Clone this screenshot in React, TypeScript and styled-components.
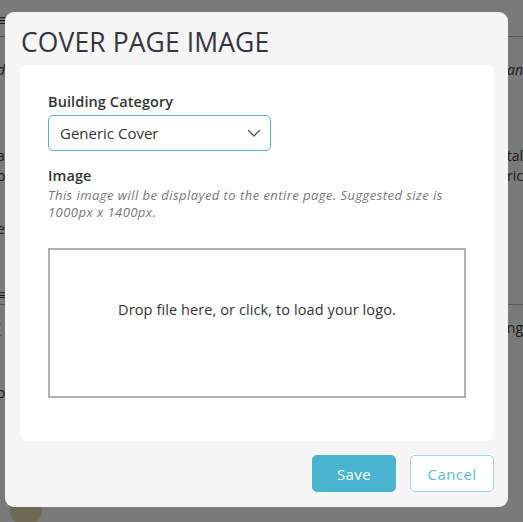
import React from "react";
import styled, { createGlobalStyle } from "styled-components";

const GlobalStyle = createGlobalStyle`
  html, body { margin: 0; padding: 0; }
  body {
    width: 523px;
    height: 522px;
    overflow: hidden;
    background: #f5f5f5;
    font-family: "Open Sans", "Noto Sans", sans-serif;
  }
  * { box-sizing: border-box; }
`;

const Page = styled.div`
  position: relative;
  width: 523px;
  height: 522px;
  overflow: hidden;
  background: #f5f5f5;
  color: #333;
`;

const BgHeader = styled.div`
  height: 37px;
  border-bottom: 1px solid #aaa;
  display: flex;
  align-items: center;
  justify-content: space-between;
  font-size: 16px;
  padding-top: 4px;
  margin-left: -2px;
`;

const BgLine = styled.div<{ $top: number; $italic?: boolean; $border?: boolean }>`
  display: flex;
  justify-content: space-between;
  align-items: center;
  margin-top: ${(p) => p.$top}px;
  height: 20px;
  font-size: 14px;
  font-style: ${(p) => (p.$italic ? "italic" : "normal")};
  color: #333;
  white-space: nowrap;
  margin-left: -3px;
  border-bottom: ${(p) => (p.$border ? "1px solid #aaa" : "none")};
`;

const Avatar = styled.div`
  width: 32px;
  height: 32px;
  border-radius: 50%;
  background: #ddd2a8;
  margin: 92px 0 0 10px;
`;

const Overlay = styled.div`
  position: absolute;
  inset: 0;
  background: rgba(0, 0, 0, 0.5);
  display: flex;
  align-items: flex-start;
  padding: 12px 15px 0 5px;
`;

const Modal = styled.div`
  width: 503px;
  height: 495px;
  background: #f5f5f5;
  border-radius: 9px;
  display: flex;
  flex-direction: column;
  padding: 14px 14px 15px 15px;
`;

const Title = styled.h2`
  margin: 0 0 7px 1px;
  font-family: "Open Sans", sans-serif;
  font-weight: 400;
  font-size: 26.5px;
  line-height: 32px;
  color: #35353f;
  letter-spacing: 0.1px;
`;

const Card = styled.div`
  background: #fff;
  border-radius: 7px;
  padding: 28px 28px 0;
  display: flex;
  flex-direction: column;
  flex: 1;
`;

const Label = styled.label`
  font-size: 14.5px;
  font-weight: 600;
  color: #333;
  line-height: 18px;
  letter-spacing: 0.1px;
`;

const SelectBox = styled.div`
  margin-top: 4px;
  width: 223px;
  height: 36px;
  border: 1px solid #4ab3d0;
  border-radius: 5px;
  display: flex;
  align-items: center;
  justify-content: space-between;
  padding: 0 8px 0 11px;
  font-size: 15px;
  color: #333;
`;

const Field = styled.div<{ $mt?: number }>`
  display: flex;
  flex-direction: column;
  margin-top: ${(p) => p.$mt ?? 0}px;
`;

const Hint = styled.p`
  margin: 2px 0 0;
  font-size: 13px;
  font-style: italic;
  color: #777;
  line-height: 17px;
  letter-spacing: 0.45px;
`;

const DropZone = styled.div`
  margin-top: 27px;
  height: 150px;
  border: 2px solid #b0b0b0;
  display: flex;
  align-items: center;
  justify-content: center;
  font-size: 14.5px;
  letter-spacing: 0.1px;
  color: #333;
  padding-bottom: 28px;
`;

const Footer = styled.div`
  display: flex;
  justify-content: flex-end;
  gap: 14px;
  margin-top: 14px;
`;

const Button = styled.button<{ $primary?: boolean }>`
  width: 84px;
  height: 37px;
  border-radius: 5px;
  font-family: inherit;
  font-size: 15px;
  letter-spacing: 0.4px;
  cursor: pointer;
  background: ${(p) => (p.$primary ? "#4ab3d0" : "#fff")};
  color: ${(p) => (p.$primary ? "#fff" : "#5bbcd8")};
  border: 1px solid ${(p) => (p.$primary ? "#4ab3d0" : "#9dd6e6")};
  font-weight: ${(p) => (p.$primary ? 500 : 400)};
`;

const Chevron = () => (
  <svg width="16" height="16" viewBox="0 0 16 16" fill="none">
    <path d="M2.5 5.5 L8 11 L13.5 5.5" stroke="#555" strokeWidth="1.3" strokeLinecap="round" strokeLinejoin="round" />
  </svg>
);

export default function App() {
  return (
    <>
      <GlobalStyle />
      <Page>
        <BgHeader>
          <span>≡ Cover</span>
          <span />
        </BgHeader>
        <BgLine $top={22} $italic>
          <span>details of the plan</span>
          <span>plan</span>
        </BgLine>
        <BgLine $top={66}>
          <span>all</span>
          <span>total</span>
        </BgLine>
        <BgLine $top={0}>
          <span>on</span>
          <span>Fabric</span>
        </BgLine>
        <BgLine $top={33}>
          <span>e</span>
          <span />
        </BgLine>
        <BgLine $top={47} $border>
          <span>≡</span>
          <span />
        </BgLine>
        <BgLine $top={12}>
          <span>(</span>
          <span>Setting</span>
        </BgLine>
        <BgLine $top={45}>
          <span>o</span>
          <span />
        </BgLine>
        <Avatar />
        <Overlay>
          <Modal>
            <Title>COVER PAGE IMAGE</Title>
            <Card>
              <Field>
                <Label>Building Category</Label>
                <SelectBox>
                  <span>Generic Cover</span>
                  <Chevron />
                </SelectBox>
              </Field>
              <Field $mt={16}>
                <Label>Image</Label>
                <Hint>
                  This image will be displayed to the entire page. Suggested size is
                  <br />
                  1000px x 1400px.
                </Hint>
              </Field>
              <DropZone>Drop file here, or click, to load your logo.</DropZone>
            </Card>
            <Footer>
              <Button $primary>Save</Button>
              <Button>Cancel</Button>
            </Footer>
          </Modal>
        </Overlay>
      </Page>
    </>
  );
}
